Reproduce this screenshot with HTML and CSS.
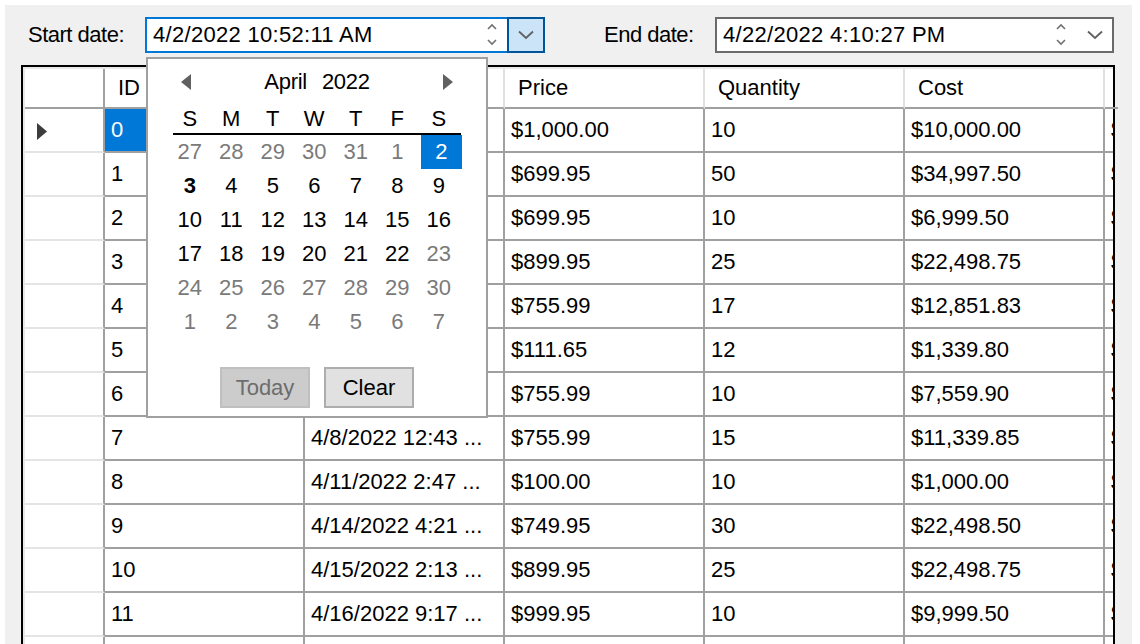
FILE: index.html
```html
<!DOCTYPE html>
<html>
<head>
<meta charset="utf-8">
<title>Date range</title>
<link rel="stylesheet" href="styles.css">
</head>
<body>
<div class="window">
  <div class="toolbar">
    <span class="lbl lbl-start">Start date:</span>
    <div class="picker focused">
      <span class="value">4/2/2022 10:52:11 AM</span>
      <svg class="spin" width="10" height="24" viewBox="0 0 10 24"><polyline points="1,6 5,2 9,6" fill="none" stroke="#707070" stroke-width="1.6"/><polyline points="1,17 5,21 9,17" fill="none" stroke="#707070" stroke-width="1.6"/></svg>
      <span class="drop active"><svg width="16" height="10" viewBox="0 0 16 10"><polyline points="1,1.5 8,8 15,1.5" fill="none" stroke="#606060" stroke-width="1.8"/></svg></span>
    </div>
    <span class="lbl lbl-end">End date:</span>
    <div class="picker end">
      <span class="value">4/22/2022 4:10:27 PM</span>
      <svg class="spin" width="10" height="24" viewBox="0 0 10 24"><polyline points="1,6 5,2 9,6" fill="none" stroke="#707070" stroke-width="1.6"/><polyline points="1,17 5,21 9,17" fill="none" stroke="#707070" stroke-width="1.6"/></svg>
      <span class="drop"><svg width="16" height="10" viewBox="0 0 16 10"><polyline points="1,1.5 8,8 15,1.5" fill="none" stroke="#606060" stroke-width="1.8"/></svg></span>
    </div>
  </div>

  <div class="grid">
    <div class="grid-inner">
      <div class="row head">
        <div class="cell rh"></div>
        <div class="cell">ID</div>
        <div class="cell"></div>
        <div class="cell">Price</div>
        <div class="cell">Quantity</div>
        <div class="cell">Cost</div>
        <div class="cell part"></div>
      </div>
      <div class="row">
        <div class="cell rh"><svg class="cur" width="10" height="17" viewBox="0 0 10 17"><polygon points="0,0 10,8.5 0,17" fill="#3c3c3c"/></svg></div>
        <div class="cell sel">0</div>
        <div class="cell"></div>
        <div class="cell">$1,000.00</div>
        <div class="cell">10</div>
        <div class="cell">$10,000.00</div>
        <div class="cell part">$</div>
      </div>
      <div class="row">
        <div class="cell rh"></div>
        <div class="cell">1</div>
        <div class="cell"></div>
        <div class="cell">$699.95</div>
        <div class="cell">50</div>
        <div class="cell">$34,997.50</div>
        <div class="cell part">$</div>
      </div>
      <div class="row">
        <div class="cell rh"></div>
        <div class="cell">2</div>
        <div class="cell"></div>
        <div class="cell">$699.95</div>
        <div class="cell">10</div>
        <div class="cell">$6,999.50</div>
        <div class="cell part">$</div>
      </div>
      <div class="row">
        <div class="cell rh"></div>
        <div class="cell">3</div>
        <div class="cell"></div>
        <div class="cell">$899.95</div>
        <div class="cell">25</div>
        <div class="cell">$22,498.75</div>
        <div class="cell part">$</div>
      </div>
      <div class="row">
        <div class="cell rh"></div>
        <div class="cell">4</div>
        <div class="cell"></div>
        <div class="cell">$755.99</div>
        <div class="cell">17</div>
        <div class="cell">$12,851.83</div>
        <div class="cell part">$</div>
      </div>
      <div class="row">
        <div class="cell rh"></div>
        <div class="cell">5</div>
        <div class="cell"></div>
        <div class="cell">$111.65</div>
        <div class="cell">12</div>
        <div class="cell">$1,339.80</div>
        <div class="cell part">$</div>
      </div>
      <div class="row">
        <div class="cell rh"></div>
        <div class="cell">6</div>
        <div class="cell"></div>
        <div class="cell">$755.99</div>
        <div class="cell">10</div>
        <div class="cell">$7,559.90</div>
        <div class="cell part">$</div>
      </div>
      <div class="row">
        <div class="cell rh"></div>
        <div class="cell">7</div>
        <div class="cell">4/8/2022 12:43 ...</div>
        <div class="cell">$755.99</div>
        <div class="cell">15</div>
        <div class="cell">$11,339.85</div>
        <div class="cell part">$</div>
      </div>
      <div class="row">
        <div class="cell rh"></div>
        <div class="cell">8</div>
        <div class="cell">4/11/2022 2:47 ...</div>
        <div class="cell">$100.00</div>
        <div class="cell">10</div>
        <div class="cell">$1,000.00</div>
        <div class="cell part">$</div>
      </div>
      <div class="row">
        <div class="cell rh"></div>
        <div class="cell">9</div>
        <div class="cell">4/14/2022 4:21 ...</div>
        <div class="cell">$749.95</div>
        <div class="cell">30</div>
        <div class="cell">$22,498.50</div>
        <div class="cell part">$</div>
      </div>
      <div class="row">
        <div class="cell rh"></div>
        <div class="cell">10</div>
        <div class="cell">4/15/2022 2:13 ...</div>
        <div class="cell">$899.95</div>
        <div class="cell">25</div>
        <div class="cell">$22,498.75</div>
        <div class="cell part">$</div>
      </div>
      <div class="row">
        <div class="cell rh"></div>
        <div class="cell">11</div>
        <div class="cell">4/16/2022 9:17 ...</div>
        <div class="cell">$999.95</div>
        <div class="cell">10</div>
        <div class="cell">$9,999.50</div>
        <div class="cell part">$</div>
      </div>
      <div class="row">
        <div class="cell rh"></div>
        <div class="cell"></div>
        <div class="cell"></div>
        <div class="cell"></div>
        <div class="cell"></div>
        <div class="cell"></div>
        <div class="cell part"></div>
      </div>
    </div>
  </div>

  <div class="calendar">
    <div class="cal-head">
      <svg width="10" height="16" viewBox="0 0 10 16"><polygon points="10,0 0,8 10,16" fill="#606060"/></svg>
      <div class="cal-title"><span>April</span><span>2022</span></div>
      <svg width="10" height="16" viewBox="0 0 10 16"><polygon points="0,0 10,8 0,16" fill="#606060"/></svg>
    </div>
    <div class="days dow">
      <span>S</span><span>M</span><span>T</span><span>W</span><span>T</span><span>F</span><span>S</span>
    </div>
    <div class="dow-line"></div>
    <div class="days">
      <span class="off">27</span><span class="off">28</span><span class="off">29</span><span class="off">30</span><span class="off">31</span><span class="off">1</span><span class="picked">2</span>
      <span class="today">3</span><span>4</span><span>5</span><span>6</span><span>7</span><span>8</span><span>9</span>
      <span>10</span><span>11</span><span>12</span><span>13</span><span>14</span><span>15</span><span>16</span>
      <span>17</span><span>18</span><span>19</span><span>20</span><span>21</span><span>22</span><span class="off">23</span>
      <span class="off">24</span><span class="off">25</span><span class="off">26</span><span class="off">27</span><span class="off">28</span><span class="off">29</span><span class="off">30</span>
      <span class="off">1</span><span class="off">2</span><span class="off">3</span><span class="off">4</span><span class="off">5</span><span class="off">6</span><span class="off">7</span>
    </div>
    <div class="cal-buttons">
      <button class="btn disabled" type="button">Today</button>
      <button class="btn" type="button">Clear</button>
    </div>
  </div>
</div>
</body>
</html>
```

FILE: styles.css
```css
html, body {
  margin: 0;
  padding: 0;
}

body {
  background: #ffffff;
  font-family: "Liberation Sans", Arial, sans-serif;
  font-size: 22px;
  color: #000000;
}

.window {
  position: relative;
  margin: 5px 8px 0 5px;
  height: 639px;
  background: #f0f0f0;
  overflow: hidden;
}

/* ---------- toolbar ---------- */
.toolbar {
  display: flex;
  align-items: center;
  height: 60px;
  padding-left: 23px;
}

.lbl {
  white-space: nowrap;
  letter-spacing: -0.5px;
}

.lbl-start {
  width: 117px;
}

.lbl-end {
  width: 111px;
  margin-left: 59px;
}

.picker {
  display: flex;
  align-items: center;
  box-sizing: border-box;
  width: 400px;
  height: 36px;
  border: 2px solid #6a6a6a;
  background: #ffffff;
}

.picker.focused {
  border-color: #0078d7;
}

.picker.end {
  width: 399px;
}

.value {
  flex: 1;
  padding-left: 6px;
  white-space: nowrap;
  letter-spacing: 0.3px;
}

.spin {
  flex: none;
  margin-right: 10px;
}

.drop {
  flex: none;
  display: flex;
  align-items: center;
  justify-content: center;
  box-sizing: border-box;
  width: 38px;
  height: 36px;
  margin: -2px -2px -2px 0;
  border: 2px solid transparent;
}

.drop.active {
  background: #cce4f7;
  border-color: #005499;
}

/* ---------- grid ---------- */
.grid {
  margin-left: 16px;
  width: 1094px;
  box-sizing: border-box;
  border: 2px solid #000000;
  border-bottom: none;
  background: #ffffff;
}

.grid-inner {
  border-top: 2px solid #e8e8e8;
  border-left: 2px solid #e8e8e8;
}

.row {
  display: flex;
}

.cell {
  flex: none;
  display: flex;
  align-items: center;
  box-sizing: border-box;
  width: 200px;
  height: 44px;
  padding-left: 6px;
  border-right: 2px solid #a0a0a0;
  border-bottom: 2px solid #a0a0a0;
  white-space: nowrap;
  overflow: hidden;
}

.cell.rh {
  width: 80px;
  padding-left: 12px;
  border-bottom-color: #e4e4e4;
}

.cell.part {
  width: 8px;
  padding-left: 6px;
  border-right: none;
}

.head .cell {
  height: 40px;
  padding-left: 13px;
  border-right-color: #e0e0e0;
}

.head .cell.rh {
  border-right-color: #a0a0a0;
  border-bottom-color: #a0a0a0;
}

.cell.sel {
  background: #0078d7;
  color: #ffffff;
}

.cur {
  display: block;
  margin-top: 2px;
}

/* ---------- calendar popup ---------- */
.calendar {
  position: absolute;
  left: 141px;
  top: 52px;
  z-index: 2;
  box-sizing: border-box;
  width: 342px;
  height: 361px;
  border: 2px solid #a0a0a0;
  background: #ffffff;
}

.cal-head {
  display: flex;
  align-items: center;
  justify-content: space-between;
  height: 46px;
  padding: 0 33px;
}

.cal-title {
  display: flex;
  gap: 15px;
  letter-spacing: -0.3px;
}

.days {
  display: grid;
  grid-template-columns: repeat(7, 41.5px);
  grid-auto-rows: 34px;
  margin-left: 21px;
}

.days span {
  display: flex;
  align-items: center;
  justify-content: center;
}

.days.dow {
  grid-auto-rows: 28px;
}

.dow-line {
  margin-left: 25px;
  width: 288px;
  height: 2px;
  background: #000000;
}

.days .off {
  color: #7a7a7a;
}

.days .today {
  font-weight: bold;
}

.days .picked {
  background: #0078d7;
  color: #ffffff;
  margin-left: 3px;
  margin-right: -2px;
}

.cal-buttons {
  display: flex;
  justify-content: center;
  gap: 14px;
  margin-top: 28px;
}

.btn {
  box-sizing: border-box;
  width: 90px;
  height: 41px;
  padding: 0;
  border: 2px solid #adadad;
  background: #e1e1e1;
  font-family: "Liberation Sans", Arial, sans-serif;
  font-size: 22px;
  color: #000000;
}

.btn.disabled {
  border-color: #bfbfbf;
  background: #cccccc;
  color: #6d6d6d;
}
```
